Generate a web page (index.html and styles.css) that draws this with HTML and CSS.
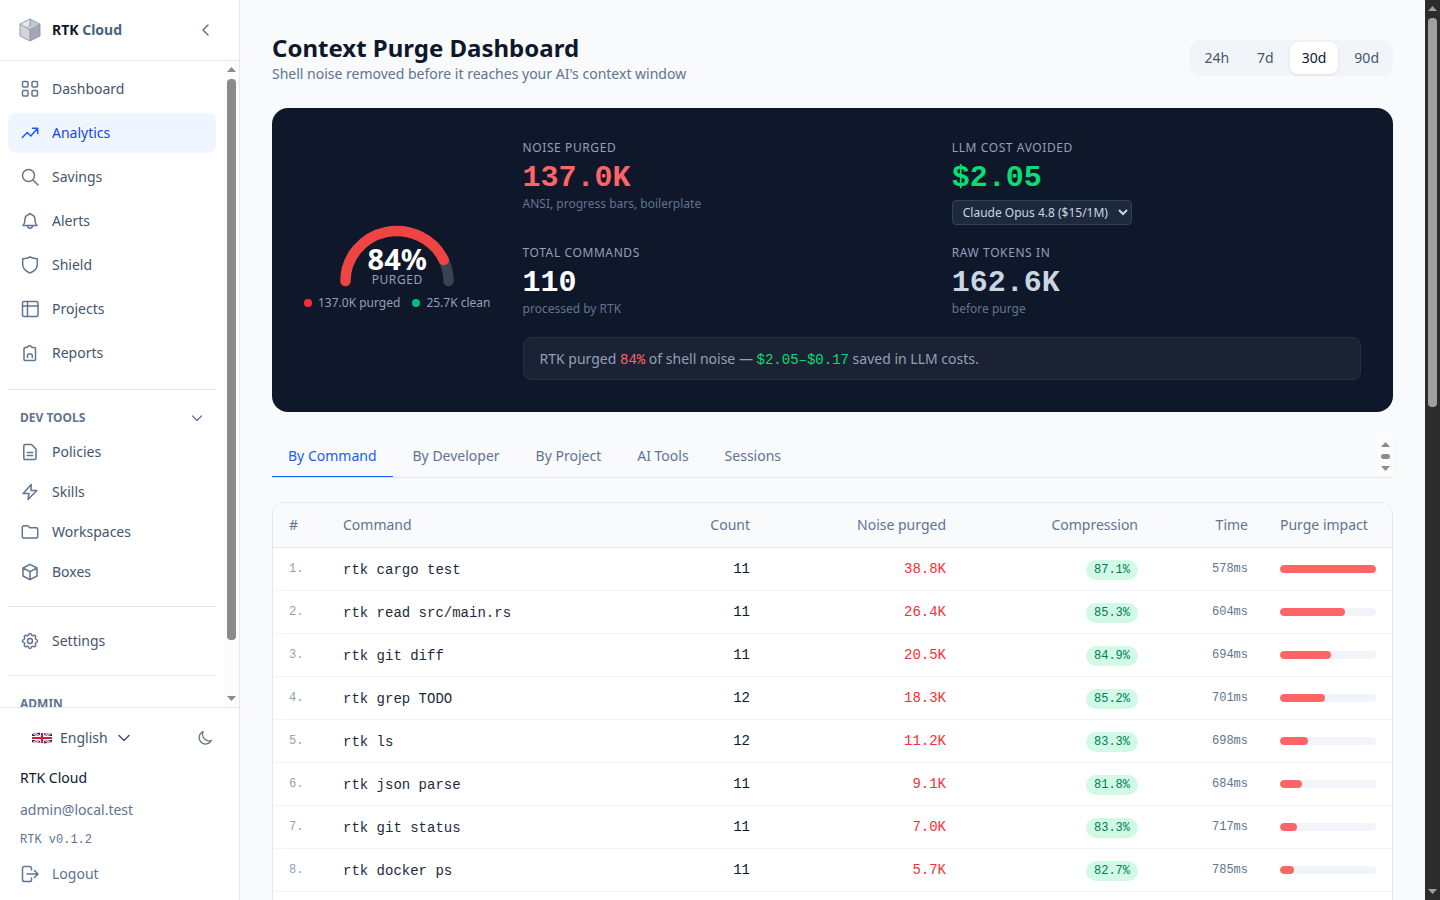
FILE: index.html
```html
<!DOCTYPE html>
<html lang="en">
<head>
  <meta charset="UTF-8">
  <meta name="viewport" content="width=device-width, initial-scale=1.0">
  <title>RTK Cloud</title>
  <link rel="stylesheet" href="styles.css">
</head>
<body>
  <div class="app">

    <aside class="sidebar">
      <div class="brand">
        <svg class="logo" viewBox="0 0 24 24">
          <path fill="#d1d5db" d="M2 6.500 12 12v11L2 18z"/>
          <path fill="#a3a9b3" d="M22 6.500 12 12v11l10-5z"/>
          <path fill="#c3c8d0" d="M12 1 2 6.500 12 12l10-5.500z"/>
          <path fill="#e5e7eb" d="M12 1v6l-5 2.200L2 6.500z"/>
          <path fill="none" stroke="#858b96" stroke-width=".8" stroke-linejoin="round" d="M12 1 2 6v12l10 5 10-5V6zM2 6l10 6 10-6M12 12v11M12 1v7"/>
        </svg>
        <span class="brand-name">RTK <span>Cloud</span></span>
        <button class="icon-btn" aria-label="Collapse sidebar">
          <svg class="icon-sm" viewBox="0 0 16 16"><path d="M10 3 5 8l5 5"/></svg>
        </button>
      </div>

      <div class="side-scroll">
        <nav class="side-nav">
          <div class="nav-group">
            <a href="#" class="nav-item"><svg class="icon" viewBox="0 0 20 20"><rect x="2.500" y="2.500" width="5.500" height="5.500" rx="1"/><rect x="12" y="2.500" width="5.500" height="5.500" rx="1"/><rect x="2.500" y="11.500" width="5.500" height="5.500" rx="1"/><rect x="12" y="11.500" width="5.500" height="5.500" rx="1"/></svg>Dashboard</a>
            <a href="#" class="nav-item active"><svg class="icon" viewBox="0 0 20 20"><path d="M2.300 14.500l5-5 3.500 3.500 6.700-7.500M12.500 5.200h5.200v5.200"/></svg>Analytics</a>
            <a href="#" class="nav-item"><svg class="icon" viewBox="0 0 20 20"><circle cx="8.500" cy="8.500" r="6"/><path d="m13 13 5 5"/></svg>Savings</a>
            <a href="#" class="nav-item"><svg class="icon" viewBox="0 0 20 20"><path d="M3 14.500h14c-1.500-1.500-2-2.500-2-6 0-2.500-1.500-4.500-4-5a1 1 0 0 0-2 0c-2.500.5-4 2.500-4 5 0 3.500-.5 4.500-2 6zM7.500 14.500c0 3.500 5 3.500 5 0"/></svg>Alerts</a>
            <a href="#" class="nav-item"><svg class="icon" viewBox="0 0 20 20"><path d="M10 2c2.200 1.300 4.500 1.700 7.300 1.700v5.800c0 4-2.800 6.700-7.300 8.500-4.500-1.800-7.300-4.500-7.300-8.500V3.700C5.500 3.700 7.800 3.300 10 2z"/></svg>Shield</a>
            <a href="#" class="nav-item"><svg class="icon" viewBox="0 0 20 20"><rect x="2.500" y="2.500" width="15.500" height="15" rx="1.500"/><path d="M2.500 7H18M7.500 2.500v15"/></svg>Projects</a>
            <a href="#" class="nav-item"><svg class="icon" viewBox="0 0 20 20"><path d="M7 4.500 8.800 2.700h1.600l1.800 1.800h2.300a1 1 0 0 1 1 1v11a1 1 0 0 1-1 1h-9.500a1 1 0 0 1-1-1v-11a1 1 0 0 1 1-1zM7.500 14.500v-2a1.500 1.500 0 0 1 1.500-1.500h1.800a1.500 1.500 0 0 1 1.500 1.500v2"/></svg>Reports</a>
          </div>

          <div class="nav-group compact">
            <button class="group-title">DEV TOOLS
              <svg class="icon-xs" viewBox="0 0 14 14"><path d="m2.500 5 4.500 4.500L11.500 5"/></svg>
            </button>
            <a href="#" class="nav-item"><svg class="icon" viewBox="0 0 20 20"><path d="M11.500 2.500H5a1.200 1.200 0 0 0-1.200 1.200v12.600A1.200 1.200 0 0 0 5 17.500h9.800a1.200 1.200 0 0 0 1.200-1.200V7zM7.200 10.500h5.500M7.200 13.500h5.500"/></svg>Policies</a>
            <a href="#" class="nav-item"><svg class="icon" viewBox="0 0 20 20"><path d="M11.200 2.500 3.200 11.500H9L8 17.500l8.800-9H11z"/></svg>Skills</a>
            <a href="#" class="nav-item"><svg class="icon" viewBox="0 0 20 20"><path d="M2.300 5A1.500 1.500 0 0 1 3.800 3.700h4l2 2h6.400a1.500 1.500 0 0 1 1.500 1.500v7.400a1.500 1.500 0 0 1-1.500 1.500H3.800a1.500 1.500 0 0 1-1.500-1.500z"/></svg>Workspaces</a>
            <a href="#" class="nav-item"><svg class="icon" viewBox="0 0 20 20"><path d="m10 2.300 7 3.700v8l-7 3.700L3 14V6zM3 6l7 3.700L17 6M10 9.700v8"/></svg>Boxes</a>
          </div>

          <div class="nav-group compact">
            <a href="#" class="nav-item"><svg class="icon" viewBox="0 0 24 24"><path stroke-width="1.800" d="M10.325 4.317c.426-1.756 2.924-1.756 3.350 0a1.724 1.724 0 0 0 2.573 1.066c1.543-.94 3.310.826 2.370 2.370a1.724 1.724 0 0 0 1.065 2.572c1.756.426 1.756 2.924 0 3.350a1.724 1.724 0 0 0-1.066 2.573c.94 1.543-.826 3.310-2.370 2.370a1.724 1.724 0 0 0-2.572 1.065c-.426 1.756-2.924 1.756-3.350 0a1.724 1.724 0 0 0-2.573-1.066c-1.543.94-3.310-.826-2.370-2.370a1.724 1.724 0 0 0-1.065-2.572c-1.756-.426-1.756-2.924 0-3.350a1.724 1.724 0 0 0 1.066-2.573c-.94-1.543.826-3.310 2.370-2.370 1 .608 2.296.07 2.572-1.065z"/><circle cx="12" cy="12" r="3" stroke-width="1.800"/></svg>Settings</a>
          </div>

          <div class="nav-group compact">
            <div class="group-title">ADMIN</div>
          </div>
        </nav>
        <div class="scrollbar" aria-hidden="true">
          <div class="track"><div class="thumb" style="height: 92%"></div></div>
        </div>
      </div>

      <div class="side-footer">
        <div class="prefs">
          <button class="lang">
            <svg class="flag" viewBox="0 0 20 12">
              <clipPath id="flag-shape"><path d="M0 2Q5 0 10 1T20 1.500V10Q15 12 10 11T0 10.500z"/></clipPath>
              <g clip-path="url(#flag-shape)">
                <path fill="#1f2a6b" d="M0 0h20v12H0z"/>
                <path stroke="#fff" stroke-width="2.400" d="m0 0 20 12M20 0 0 12"/>
                <path stroke="#cf1b3b" stroke-width=".9" d="m0 0 20 12M20 0 0 12"/>
                <path stroke="#fff" stroke-width="4" d="M10 0v12M0 6h20"/>
                <path stroke="#cf1b3b" stroke-width="2.200" d="M10 0v12M0 6h20"/>
              </g>
            </svg>
            English
            <svg class="icon-sm" viewBox="0 0 16 16"><path d="m3 5.500 5 5 5-5"/></svg>
          </button>
          <button class="icon-btn" aria-label="Dark mode">
            <svg class="icon-sm moon" viewBox="0 0 16 16"><path d="M14.500 10.300A6.500 6.500 0 1 1 6.200 1.500a6.500 6.500 0 0 0 8.300 8.800z"/></svg>
          </button>
        </div>
        <p class="org">RTK Cloud</p>
        <p class="email">admin@local.test</p>
        <p class="version">RTK v0.1.2</p>
        <button class="nav-item logout"><svg class="icon" viewBox="0 0 20 20"><path d="M11.500 6V4.300a1.800 1.800 0 0 0-1.800-1.800H4.300a1.800 1.800 0 0 0-1.800 1.800v11.400a1.800 1.800 0 0 0 1.800 1.800h5.400a1.800 1.800 0 0 0 1.800-1.800V14M7 10h11M14.500 6.500 18 10l-3.500 3.500"/></svg>Logout</button>
      </div>
    </aside>

    <main class="content">
      <header class="page-header">
        <div>
          <h1>Context Purge Dashboard</h1>
          <p>Shell noise removed before it reaches your AI's context window</p>
        </div>
        <div class="range">
          <button>24h</button>
          <button>7d</button>
          <button class="active">30d</button>
          <button>90d</button>
        </div>
      </header>

      <section class="hero">
        <div class="gauge-block">
          <div class="gauge">
            <svg viewBox="0 0 130 78">
              <path class="gauge-track" d="M111.700 50.900A51.500 50 0 0 1 116.500 72"/>
              <path class="gauge-value" d="M13.500 72A51.500 50 0 0 1 111.700 50.900"/>
            </svg>
            <div class="gauge-text">
              <strong>84%</strong>
              <span>PURGED</span>
            </div>
          </div>
          <div class="legend">
            <span class="purged">137.0K purged</span>
            <span class="clean">25.7K clean</span>
          </div>
        </div>

        <div class="metrics">
          <div class="metric">
            <p class="label">NOISE PURGED</p>
            <p class="value red">137.0K</p>
            <p class="note">ANSI, progress bars, boilerplate</p>
          </div>
          <div class="metric">
            <p class="label">LLM COST AVOIDED</p>
            <p class="value green">$2.05</p>
            <select class="model" aria-label="Model">
              <option>Claude Opus 4.8 ($15/1M)</option>
            </select>
          </div>
          <div class="metric">
            <p class="label">TOTAL COMMANDS</p>
            <p class="value">110</p>
            <p class="note">processed by RTK</p>
          </div>
          <div class="metric">
            <p class="label">RAW TOKENS IN</p>
            <p class="value gray">162.6K</p>
            <p class="note">before purge</p>
          </div>
          <p class="summary">RTK purged <code class="red">84%</code> of shell noise — <code class="green">$2.05–$0.17</code> saved in LLM costs.</p>
        </div>
      </section>

      <div class="tabs">
        <nav class="tab-list">
          <button class="active">By Command</button>
          <button>By Developer</button>
          <button>By Project</button>
          <button>AI Tools</button>
          <button>Sessions</button>
        </nav>
        <div class="scrollbar" aria-hidden="true">
          <div class="track"><div class="thumb" style="height: 100%"></div></div>
        </div>
      </div>

      <div class="card">
        <table>
          <colgroup>
            <col class="col-rank">
            <col>
            <col class="col-count">
            <col class="col-noise">
            <col class="col-compression">
            <col class="col-time">
            <col class="col-impact">
          </colgroup>
          <thead>
            <tr>
              <th>#</th>
              <th>Command</th>
              <th class="num">Count</th>
              <th class="num">Noise purged</th>
              <th class="num">Compression</th>
              <th class="num">Time</th>
              <th>Purge impact</th>
            </tr>
          </thead>
          <tbody>
            <tr>
              <td class="rank">1.</td><td class="cmd"><code>rtk cargo test</code></td><td class="num">11</td><td class="num noise">38.8K</td>
              <td class="num"><span class="badge">87.1%</span></td><td class="num time">578ms</td>
              <td><div class="bar"><div style="width: 100%"></div></div></td>
            </tr>
            <tr>
              <td class="rank">2.</td><td class="cmd"><code>rtk read src/main.rs</code></td><td class="num">11</td><td class="num noise">26.4K</td>
              <td class="num"><span class="badge">85.3%</span></td><td class="num time">604ms</td>
              <td><div class="bar"><div style="width: 68%"></div></div></td>
            </tr>
            <tr>
              <td class="rank">3.</td><td class="cmd"><code>rtk git diff</code></td><td class="num">11</td><td class="num noise">20.5K</td>
              <td class="num"><span class="badge">84.9%</span></td><td class="num time">694ms</td>
              <td><div class="bar"><div style="width: 53%"></div></div></td>
            </tr>
            <tr>
              <td class="rank">4.</td><td class="cmd"><code>rtk grep TODO</code></td><td class="num">12</td><td class="num noise">18.3K</td>
              <td class="num"><span class="badge">85.2%</span></td><td class="num time">701ms</td>
              <td><div class="bar"><div style="width: 47%"></div></div></td>
            </tr>
            <tr>
              <td class="rank">5.</td><td class="cmd"><code>rtk ls</code></td><td class="num">12</td><td class="num noise">11.2K</td>
              <td class="num"><span class="badge">83.3%</span></td><td class="num time">698ms</td>
              <td><div class="bar"><div style="width: 29%"></div></div></td>
            </tr>
            <tr>
              <td class="rank">6.</td><td class="cmd"><code>rtk json parse</code></td><td class="num">11</td><td class="num noise">9.1K</td>
              <td class="num"><span class="badge">81.8%</span></td><td class="num time">684ms</td>
              <td><div class="bar"><div style="width: 23%"></div></div></td>
            </tr>
            <tr>
              <td class="rank">7.</td><td class="cmd"><code>rtk git status</code></td><td class="num">11</td><td class="num noise">7.0K</td>
              <td class="num"><span class="badge">83.3%</span></td><td class="num time">717ms</td>
              <td><div class="bar"><div style="width: 18%"></div></div></td>
            </tr>
            <tr>
              <td class="rank">8.</td><td class="cmd"><code>rtk docker ps</code></td><td class="num">11</td><td class="num noise">5.7K</td>
              <td class="num"><span class="badge">82.7%</span></td><td class="num time">785ms</td>
              <td><div class="bar"><div style="width: 15%"></div></div></td>
            </tr>
            <tr>
              <td colspan="7"></td>
            </tr>
          </tbody>
        </table>
      </div>
    </main>

    <div class="scrollbar dark" aria-hidden="true">
      <div class="track"><div class="thumb" style="height: 45%"></div></div>
    </div>

  </div>
</body>
</html>
```
FILE: styles.css
```css
* {
  box-sizing: border-box;
}

body {
  margin: 0;
  font-family: "Noto Sans", sans-serif;
  font-size: 14px;
  line-height: 20px;
  color: #0f172b;
  background-color: #f8fafc;
}

h1, p {
  margin: 0;
}

button {
  border: none;
  background: none;
  padding: 0;
  font: inherit;
  color: inherit;
  cursor: pointer;
}

a {
  color: inherit;
  text-decoration: none;
}

code {
  font-family: "Liberation Mono", monospace;
  font-size: 14px;
  line-height: 1;
}

svg {
  flex-shrink: 0;
}

.icon, .icon-sm, .icon-xs {
  width: 20px;
  height: 20px;
  fill: none;
  stroke: currentColor;
  stroke-width: 1.5;
  stroke-linecap: round;
  stroke-linejoin: round;
}

.icon-sm {
  width: 16px;
  height: 16px;
}

.icon-xs {
  width: 14px;
  height: 14px;
  stroke-width: 1.2;
}

.moon {
  stroke-width: 1.2;
}

.app {
  display: flex;
  height: 100vh;
  overflow: hidden;
}

/* Scrollbars */
.scrollbar {
  --bar: #8b8b8b;
  display: flex;
  flex-direction: column;
  flex-shrink: 0;
  gap: 7px;
  width: 15px;
  padding: 6px 3px;
  background-color: #fcfcfc;
}

.scrollbar::before, .scrollbar::after {
  content: "";
  height: 5px;
  background-color: var(--bar);
  clip-path: polygon(50% 0, 100% 100%, 0 100%);
}

.scrollbar::after {
  clip-path: polygon(0 0, 100% 0, 50% 100%);
}

.track {
  flex: 1;
}

.thumb {
  border-radius: 4px;
  background-color: var(--bar);
}

.scrollbar.dark {
  --bar: #9f9f9f;
  background-color: #2c2c2c;
}

/* Sidebar */
.sidebar {
  display: flex;
  flex-direction: column;
  flex-shrink: 0;
  width: 240px;
  background-color: #fff;
  border-right: 1px solid #e2e8f0;
}

.brand {
  display: flex;
  align-items: center;
  gap: 10px;
  height: 61px;
  padding: 0 25px 0 18px;
  border-bottom: 1px solid #e2e8f0;
}

.logo {
  width: 24px;
  height: 24px;
}

.brand-name {
  flex: 1;
  font-weight: 700;
}

.brand-name span {
  color: #45657e;
}

.icon-btn {
  display: flex;
  color: #62748e;
}

.side-scroll {
  display: flex;
  flex: 1;
  min-height: 0;
}

.side-nav {
  flex: 1;
  overflow: hidden;
  padding: 8px;
}

.nav-group {
  display: flex;
  flex-direction: column;
  gap: 4px;
}

.nav-group + .nav-group {
  margin-top: 16px;
  padding-top: 16px;
  border-top: 1px solid #e2e8f0;
}

.nav-item {
  display: flex;
  align-items: center;
  gap: 12px;
  padding: 10px 12px;
  border-radius: 8px;
  color: #45556c;
}

.compact .nav-item {
  padding: 8px 12px;
}

.nav-item .icon {
  color: #62748e;
}

.nav-item.active {
  background-color: #eff6ff;
  color: #1447e6;
}

.nav-item.active .icon {
  color: #155dfc;
}

.group-title {
  display: flex;
  align-items: center;
  justify-content: space-between;
  padding: 4px 12px;
  font-size: 12px;
  line-height: 16px;
  font-weight: 700;
  color: #62748e;
}

.side-footer {
  display: flex;
  flex-direction: column;
  padding: 12px 12px 8px;
  border-top: 1px solid #e2e8f0;
}

.side-footer p {
  margin-top: 12px;
  padding: 0 8px;
}

.prefs {
  display: flex;
  align-items: center;
  justify-content: space-between;
  height: 36px;
  padding: 0 14px 0 20px;
  color: #45556c;
}

.lang {
  display: flex;
  align-items: center;
  gap: 8px;
}

.flag {
  width: 20px;
  height: 12px;
}

.email {
  color: #62748e;
}

.side-footer .version {
  font-family: "Liberation Mono", monospace;
  font-size: 12px;
  line-height: 16px;
  color: #62748e;
}

.logout {
  margin-top: 8px;
  padding: 8px;
  color: #62748e;
}

/* Content */
.content {
  flex: 1;
  min-width: 0;
  padding: 32px;
}

.page-header {
  display: flex;
  align-items: center;
  justify-content: space-between;
  margin-bottom: 24px;
}

.page-header h1 {
  font-size: 24px;
  line-height: 32px;
  font-weight: 700;
}

.page-header p {
  color: #62748e;
}

.range {
  display: flex;
  gap: 4px;
  padding: 2px;
  border-radius: 10px;
  background-color: #f1f5f9;
  color: #45556c;
}

.range button {
  padding: 6px 12px;
  border-radius: 8px;
}

.range .active {
  background-color: #fff;
  color: #0f172b;
  box-shadow: 0 1px 3px rgba(0, 0, 0, 0.1);
}

/* Hero */
.hero {
  display: flex;
  align-items: center;
  gap: 32px;
  padding: 32px;
  border-radius: 16px;
  background-color: #0f172b;
  color: #fff;
}

.gauge-block {
  display: flex;
  flex-direction: column;
  align-items: center;
  gap: 8px;
}

.gauge {
  position: relative;
  width: 130px;
  height: 78px;
}

.gauge path {
  fill: none;
  stroke-width: 10.5;
  stroke-linecap: round;
}

.gauge-track {
  stroke: #3a4252;
}

.gauge-value {
  stroke: #ef4444;
}

/* sits inside the arc */
.gauge-text {
  position: absolute;
  inset: auto 0 0;
  display: flex;
  flex-direction: column;
  align-items: center;
}

.gauge-text strong {
  font-size: 29px;
  line-height: 28px;
}

.gauge-text span {
  font-size: 12px;
  line-height: 14px;
  letter-spacing: 0.05em;
  color: #90a1b9;
}

.legend {
  display: flex;
  gap: 12px;
  font-size: 12px;
  line-height: 16px;
  color: #90a1b9;
}

.legend span {
  display: flex;
  align-items: center;
  gap: 6px;
}

.legend span::before {
  content: "";
  width: 8px;
  height: 8px;
  border-radius: 50%;
}

.legend .purged::before {
  background-color: #fb2c36;
}

.legend .clean::before {
  background-color: #00bc7d;
}

.metrics {
  flex: 1;
  display: grid;
  grid-template-columns: 1fr 1fr;
  gap: 20px;
}

.metric .label {
  font-size: 12px;
  line-height: 16px;
  letter-spacing: 0.05em;
  color: #90a1b9;
}

.metric .value {
  margin-top: 4px;
  font-family: "Liberation Mono", monospace;
  font-size: 30px;
  line-height: 36px;
  font-weight: 700;
}

.metric .note {
  font-size: 12px;
  line-height: 16px;
  color: #62748e;
}

.red {
  color: #ff6467;
}

.green {
  color: #05df72;
}

.gray {
  color: #cad5e2;
}

.model {
  display: block;
  height: 25px;
  margin-top: 4px;
  padding: 0 6px;
  border: 1px solid #314158;
  border-radius: 4px;
  background-color: #1d293d;
  color: #cad5e2;
  font: inherit;
  font-size: 12px;
}

.summary {
  grid-column: 1 / -1;
  padding: 10px 16px;
  border: 1px solid #272f41;
  border-radius: 8px;
  background-color: #1a2233;
  line-height: 21px;
  color: #90a1b9;
}

/* Tabs */
.tabs {
  display: flex;
  margin: 24px 0;
  border-bottom: 1px solid #e2e8f0;
}

.tab-list {
  display: flex;
  flex: 1;
  gap: 4px;
  height: 41px;
  overflow: hidden;
  color: #62748e;
}

.tab-list button {
  flex-shrink: 0;
  height: 42px;
  padding: 0 16px;
  border-bottom: 2px solid transparent;
  white-space: nowrap;
}

.tab-list .active {
  border-bottom-color: #155dfc;
  color: #155dfc;
}

/* Table */
.card {
  overflow: hidden;
  border: 1px solid #e2e8f0;
  border-radius: 12px;
  background-color: #fff;
}

table {
  width: 100%;
  table-layout: fixed;
  border-spacing: 0;
}

.col-rank { width: 54px; }
.col-count { width: 120px; }
.col-noise { width: 196px; }
.col-compression { width: 192px; }
.col-time { width: 110px; }
.col-impact { width: 128px; }

th {
  padding: 12px 16px;
  border-bottom: 1px solid #e2e8f0;
  background-color: #f8fafc;
  font-weight: 400;
  text-align: left;
  color: #62748e;
}

td {
  height: 43px;
  padding: 0 16px;
  border-bottom: 1px solid #f1f5f9;
  font-family: "Liberation Mono", monospace;
}

.num {
  text-align: right;
}

.rank, .time {
  font-size: 12px;
  color: #62748e;
}

.rank {
  color: #90a1b9;
}

.cmd {
  font-family: "Noto Sans", sans-serif;
  color: #1d293d;
}

.noise {
  color: #fb2c36;
}

.badge {
  display: inline-block;
  padding: 2px 8px;
  border-radius: 10px;
  background-color: #d0fae5;
  color: #007a55;
  font-size: 12px;
  line-height: 16px;
}

.bar {
  height: 8px;
  border-radius: 4px;
  overflow: hidden;
  background-color: #f1f5f9;
}

.bar div {
  height: 100%;
  border-radius: 4px;
  background-color: #ff6467;
}
```
